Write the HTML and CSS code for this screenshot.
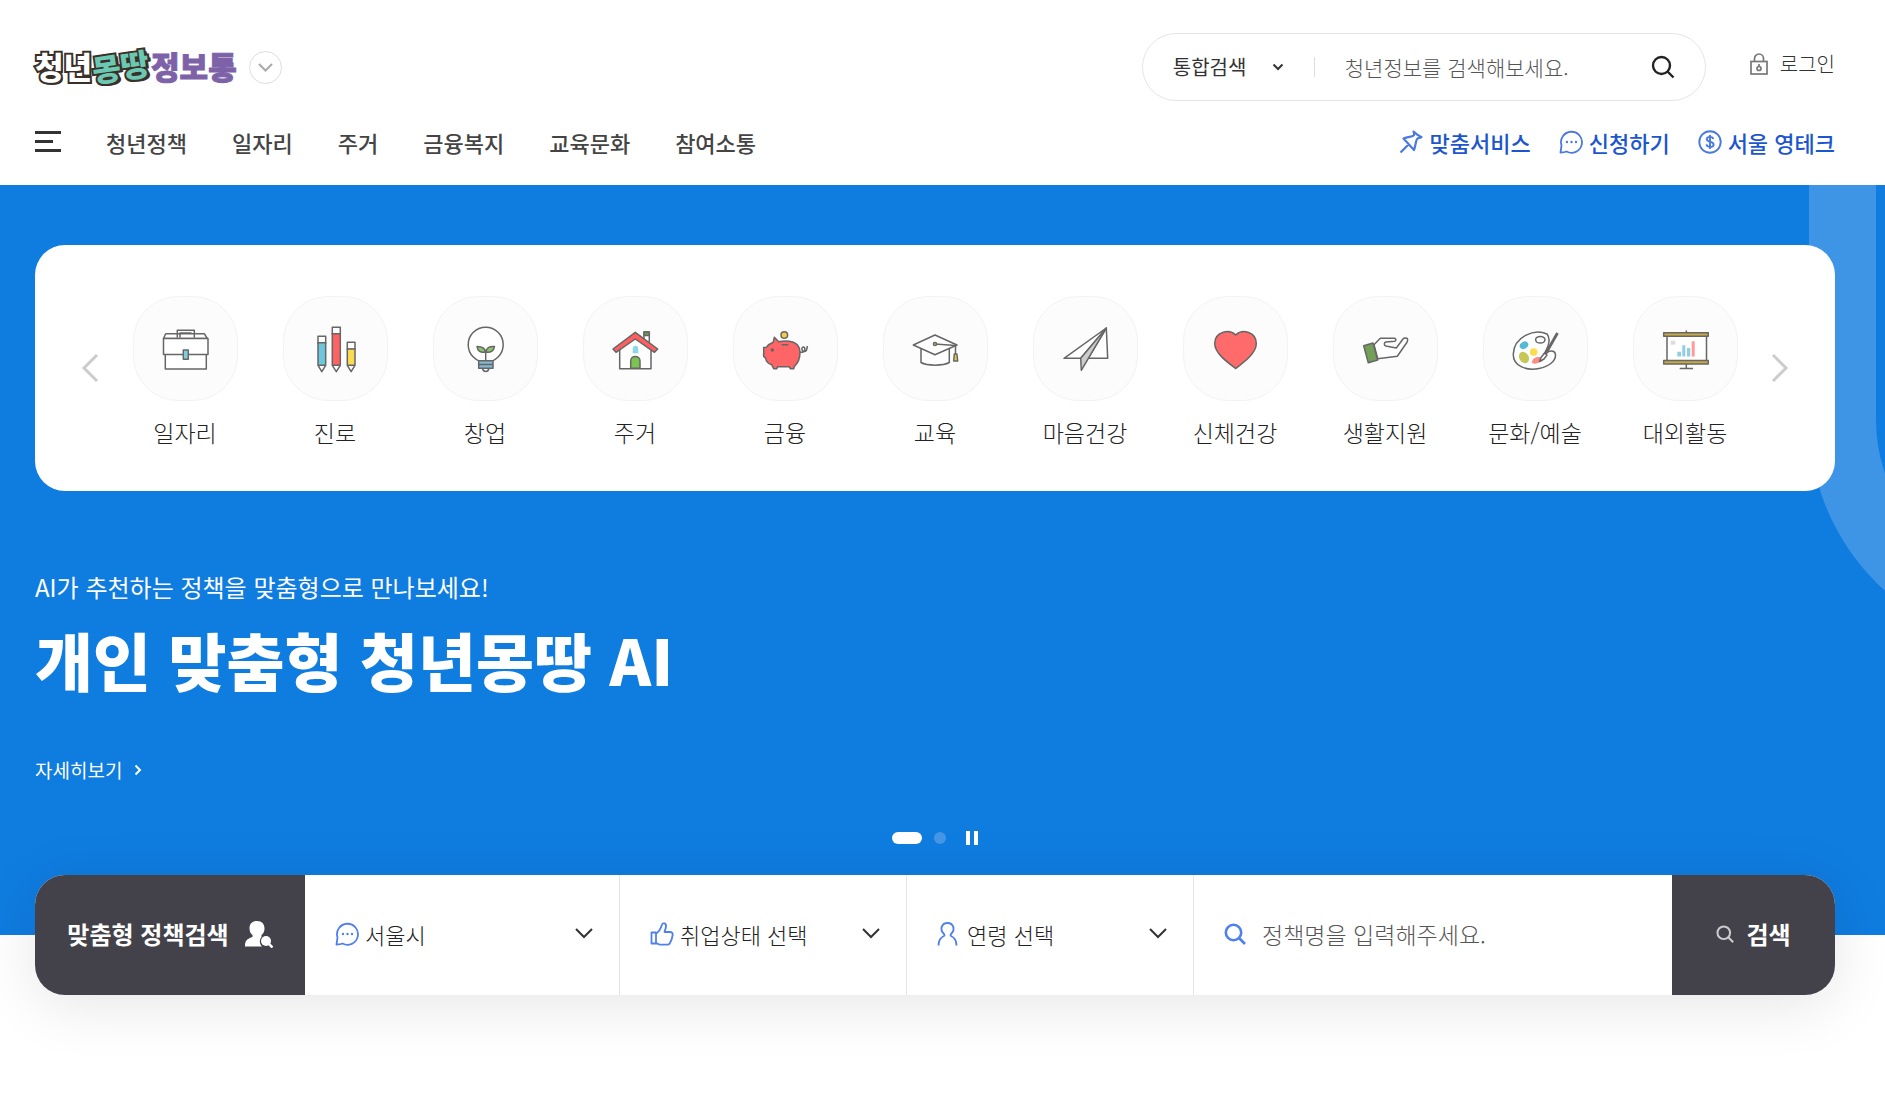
FILE: index.html
```html
<!DOCTYPE html>
<html lang="ko">
<head>
    <meta charset="UTF-8">
    <meta name="viewport" content="width=device-width, initial-scale=1.0">
    <title>청년몽땅정보통</title>
    <link rel="stylesheet" href="styles.css">
</head>
<body>
    <header class="header">
        <div class="header-top">
            <div class="brand">
                <a href="#" class="logo"><span class="logo-youth">청년</span><span class="logo-all">몽땅</span><span class="logo-info">정보통</span></a>
                <button type="button" class="brand-toggle" aria-label="사이트 더보기">
                    <svg width="15" height="9" viewBox="0 0 15 9"><path d="M1 1l6.500 6.500L14 1" fill="none" stroke="#aaa" stroke-width="2"/></svg>
                </button>
            </div>
            <div class="header-tools">
                <form class="site-search">
                    <label class="search-type">
                        <select aria-label="검색 구분">
                            <option>통합검색</option>
                        </select>
                        <svg width="12" height="8" viewBox="0 0 12 8"><path d="M1.500 1.500L6 6l4.500-4.500" fill="none" stroke="#333" stroke-width="2"/></svg>
                    </label>
                    <input type="text" placeholder="청년정보를 검색해보세요." aria-label="검색어">
                    <button type="submit" class="icon-button" aria-label="검색">
                        <svg width="24" height="24" viewBox="0 0 24 24"><g fill="none" stroke="#222" stroke-width="2.400"><circle cx="10.500" cy="10.500" r="8.500"/><path d="M16.500 16.500L22.500 22.500"/></g></svg>
                    </button>
                </form>
                <a href="#" class="login">
                    <svg width="18" height="22" viewBox="0 0 18 22"><g fill="none" stroke="#777" stroke-width="1.700"><rect x="1" y="8.500" width="16" height="12.500"/><path d="M4.500 8V5.500a4.500 4.500 0 0 1 9 0V8"/><circle cx="9" cy="15.500" r="2"/><path d="M9 11v3"/></g></svg>
                    로그인
                </a>
            </div>
        </div>
        <div class="header-nav">
            <nav class="main-nav">
                <button type="button" class="menu-button" aria-label="전체메뉴"><i></i><i></i><i></i></button>
                <a href="#">청년정책</a>
                <a href="#">일자리</a>
                <a href="#">주거</a>
                <a href="#">금융복지</a>
                <a href="#">교육문화</a>
                <a href="#">참여소통</a>
            </nav>
            <nav class="quick-nav">
                <a href="#">
                    <svg width="24" height="24" viewBox="0 0 24 24"><path d="M14.500 1.500c2.500 2.500 5 4.500 8 5.500-1.500 1-3 1-4 1.500-2 2-1.500 6-3.500 11.500L4.500 8.500C10 6.500 14 7 15 5c.500-1.500 0-2.500-.500-3.500zM9.500 14.500l-8 8" fill="none" stroke="#4a7ade" stroke-width="2.200" stroke-linejoin="round"/></svg>
                    맞춤서비스
                </a>
                <a href="#">
                    <svg width="24" height="24" viewBox="0 0 24 24"><path d="M1.500 22.500l1-7A10.500 10.500 0 1 1 7.500 21.500c-2 1-4 1-6 1z" fill="none" stroke="#4a7ade" stroke-width="1.800" stroke-linejoin="round"/><g fill="#4a7ade"><circle cx="8" cy="12" r="1.200"/><circle cx="12.500" cy="12" r="1.200"/><circle cx="17" cy="12" r="1.200"/></g></svg>
                    신청하기
                </a>
                <a href="#">
                    <svg width="24" height="24" viewBox="0 0 24 24"><g fill="none" stroke="#4a7ade"><circle cx="12" cy="12" r="10.700" stroke-width="1.900"/><path d="M15.300 9c-.800-3-6.600-2.700-6.600.2 0 3.300 6.900 1.800 6.900 5.200 0 3.300-6.500 3.300-7.200 0M12 5v14" stroke-width="1.900"/></g></svg>
                    서울 영테크
                </a>
            </nav>
        </div>
    </header>

    <main>
        <section class="hero">
            <div class="category-panel">
                <button type="button" class="slide-button" aria-label="이전">
                    <svg width="18" height="30" viewBox="0 0 18 30"><path d="M16 2L3 15l13 13" fill="none" stroke="#ccc" stroke-width="3"/></svg>
                </button>
                <ul class="category-list">
                    <li><a href="#">
                        <span class="category-icon">
                            <!-- briefcase -->
                            <svg class="line" viewBox="0 0 48 48"><path d="M16.300 12.500V5.300h17v7.200M19 12.500V8h11.500M2.500 13.500l2.200-4.800h38.600l3 4.800z"/><rect x="4.300" y="29" width="41" height="15"/><rect x="2.500" y="13.500" width="44.500" height="16"/><rect x="22.300" y="25" width="5" height="9.300" fill="#82cde0"/></svg>
                        </span>
                        일자리
                    </a></li>
                    <li><a href="#">
                        <span class="category-icon">
                            <!-- pencils -->
                            <svg class="line" viewBox="0 0 48 48"><path d="M7 40.300l3.800 6.400 3.900-6.400M21.300 40.300l4 6.400 4-6.400M36.300 40.300l3.800 6.400 3.900-6.400"/><rect x="7" y="11.300" width="7.700" height="7"/><rect x="21.300" y="2.300" width="8" height="7"/><rect x="36.300" y="17.300" width="7.700" height="7"/><rect x="7" y="17.700" width="7.700" height="22.600" fill="#6cc6dc"/><rect x="21.300" y="8.700" width="8" height="31.600" fill="#ff6262"/><rect x="36.300" y="24" width="7.700" height="16.300" fill="#fbdc50"/></svg>
                        </span>
                        진로
                    </a></li>
                    <li><a href="#">
                        <span class="category-icon">
                            <!-- light bulb -->
                            <svg class="line" viewBox="0 0 48 48"><circle cx="24.700" cy="19.700" r="17.500"/><path d="M24.700 36V26"/><path d="M24.500 27c-5 1-8-1-8.500-5.500 4.500 0 8 1 8.500 5.500zM25 27c0-4 3.500-6 8.500-5.500C33 25.500 30 28 25 27z" fill="#8dc66c"/><path d="M21.500 43.500c1 4 5.500 4 6.500 0"/><path d="M17.700 35.700H32v7.600H17.700zM17.700 39.500H32" fill="#82b9d0"/></svg>
                        </span>
                        창업
                    </a></li>
                    <li><a href="#">
                        <span class="category-icon">
                            <!-- house -->
                            <svg class="line" viewBox="0 0 48 48"><rect x="33" y="7" width="5.300" height="12"/><rect x="33" y="7" width="5.300" height="3.500" fill="#67a047"/><path d="M8.700 24v19.700H40V24L24.300 12z"/><path d="M24.300 7.300L2 24l3 3.300L24.300 14l19.200 13.300 3.200-3.300z" fill="#ff5f61"/><path d="M19.700 43.300V36c0-6 9.300-6 9.300 0v7.300z" fill="#7cc452"/><path d="M21.700 28.300v-4.500c0-4 5.600-4 5.600 0v4.500z" fill="#90d7e6" stroke="none"/></svg>
                        </span>
                        주거
                    </a></li>
                    <li><a href="#">
                        <span class="category-icon">
                            <!-- piggy bank -->
                            <svg class="line" viewBox="0 0 48 48"><path d="M39 27c5 2 6-5 3.500-5s-2 5 1 4.500 2-3 3-5.500" fill="none"/><path d="M13.300 12.300l4.400 4.500c4-1 10-1 14 .2 4.500 1.500 7.300 5.500 7.300 10.300 0 6-2 11-5.700 14l-.6 2.400h-3.400l-1-2H16.700l-1 2h-3l-2-4C6.500 38.500 5 36 4.500 33c-2-1-2.200-3-1.800-4.700V22.500l2.800-.3c1.500-2.200 3.500-3.700 6.700-4.900z" fill="#ff6466"/><path d="M20.500 19.800h7"/><circle cx="11.300" cy="25" r="1" fill="#444"/><circle cx="23.300" cy="10" r="3.300" fill="#f5cf43"/></svg>
                        </span>
                        금융
                    </a></li>
                    <li><a href="#">
                        <span class="category-icon">
                            <!-- graduation cap -->
                            <svg class="line" viewBox="0 0 48 48"><path d="M10 23v14.500c6 3.500 22 3.500 28.300 0V23"/><path d="M2.300 20L24 10l22 10-22 9.700z"/><path d="M24 19l20.500 1.500V29" fill="none"/><circle cx="24" cy="19" r="1.600" fill="#e8ca48"/><path d="M43.300 29h2.600l.8 7h-4z" fill="#e8ca48"/></svg>
                        </span>
                        교육
                    </a></li>
                    <li><a href="#">
                        <span class="category-icon">
                            <!-- paper plane -->
                            <svg class="line" viewBox="0 0 48 48"><path d="M45.300 3L3 33.300h16.700zM45.300 3l1.400 30.300H27z"/><path d="M45.300 3L19.700 33.300l.6 12z" fill="#ccc"/></svg>
                        </span>
                        마음건강
                    </a></li>
                    <li><a href="#">
                        <span class="category-icon">
                            <!-- heart -->
                            <svg class="line" viewBox="0 0 48 48"><path d="M24.700 43.500C16 37 3.700 28 3.700 18.500 3.700 7 18 3.500 24.700 10c6.700-6.500 20.600-3 20.600 8.500 0 9.500-12 18.500-20.600 25z" fill="#ff6a6b"/></svg>
                        </span>
                        신체건강
                    </a></li>
                    <li><a href="#">
                        <span class="category-icon">
                            <!-- helping hand -->
                            <svg class="line" viewBox="0 0 48 48"><path d="M13 19.700l6.300-6.400h14c2 0 2 2.500.5 3l-9 .7c-2 .5-2 3.500 0 4l10.500 2L42 14c.5-.7 1.500-.9 2.500-.9 2 0 2.900.7 1.500 4.200L36.300 31.300l-19.600 2.400z"/><path d="M2.700 20.700L12 18l4.700 17-9.400 2.700z" fill="#739f59"/></svg>
                        </span>
                        생활지원
                    </a></li>
                    <li><a href="#">
                        <span class="category-icon">
                            <!-- palette -->
                            <svg class="line" viewBox="0 0 48 48"><path d="M36 9C23 3 3 12 2.300 29c-.5 12 13 17 25.700 14.500C38 41.500 44.700 36 44.500 30c-.2-4-4-5-8.500-2.500L32 31c4-7 9-16 4-22z"/><ellipse cx="29.300" cy="14.700" rx="4.700" ry="3.300"/><g stroke="none"><ellipse cx="13" cy="20.300" rx="4.500" ry="3.500" fill="#56b9d3" transform="rotate(-30 13 20.300)"/><ellipse cx="13" cy="32.500" rx="4.700" ry="6" fill="#c7c755" transform="rotate(-30 13 32.500)"/><circle cx="22.700" cy="27" r="3.800" fill="#ffdc4b"/><path d="M21 38c0-5 5-7 9-5.500 3 1.500 3 3-1 4.500-3 1.500-5 2.500-8 1z" fill="#ff8b88"/></g><path d="M46.500 8L34.500 29" stroke-width="2.800"/><path d="M33.500 28l-3.500 4.500-1.500 4 4.500-2.500 3-4z"/></svg>
                        </span>
                        문화/예술
                    </a></li>
                    <li><a href="#">
                        <span class="category-icon">
                            <!-- presentation board -->
                            <svg class="line" viewBox="0 0 48 48"><path d="M25.300 5.500v3M25.300 39v4.300M18.700 43.500H32"/><rect x="6" y="10" width="39.500" height="27"/><g fill="#c7aa44"><rect x="2.700" y="7.700" width="44.600" height="3.500"/><rect x="2.700" y="35.500" width="44.600" height="3.500"/></g><g stroke="none"><path d="M9.700 15.700h4.600v4H9.700z" fill="#ddd"/><path d="M16.300 26.700H20v4.800h-3.700zM21.300 20.300h3v11.200h-3zM26 23h3.300v8.500H26z" fill="#91cfe0"/><path d="M30.700 16.300h3v15.200h-3z" fill="#ff9a98"/></g></svg>
                        </span>
                        대외활동
                    </a></li>
                </ul>
                <button type="button" class="slide-button" aria-label="다음">
                    <svg width="18" height="30" viewBox="0 0 18 30"><path d="M2 2l13 13L2 28" fill="none" stroke="#ccc" stroke-width="3"/></svg>
                </button>
            </div>

            <p class="hero-sub">AI가 추천하는 정책을 맞춤형으로 만나보세요!</p>
            <h1 class="hero-title">개인 맞춤형 청년몽땅 AI</h1>
            <a href="#" class="hero-more">
                자세히보기
                <svg width="8" height="12" viewBox="0 0 8 12"><path d="M1.500 1.500L6 6l-4.500 4.500" fill="none" stroke="#fff" stroke-width="2"/></svg>
            </a>
            <div class="pager">
                <button type="button" class="pager-dot active" aria-label="1번 배너"></button>
                <button type="button" class="pager-dot" aria-label="2번 배너"></button>
                <button type="button" class="pager-pause" aria-label="일시정지"></button>
            </div>
        </section>

        <form class="policy-search">
            <h2 class="policy-title">
                맞춤형 정책검색
                <svg width="28" height="28" viewBox="0 0 28 28"><path d="M12 1c5 0 7.500 3 7.500 7.500 0 3-1 5-3 6.500v2c-2.500 3-2 7 .5 9.500H0c0-5 1-7.500 7.500-9.500v-2C5.500 13.500 4.500 11 4.500 8.500 4.500 4 7 1 12 1z" fill="#fff"/><circle cx="21" cy="21" r="5" fill="#fff"/><path d="M24 24l3.500 3.500" stroke="#fff" stroke-width="2.500"/></svg>
            </h2>
            <label class="policy-field region">
                <svg width="24" height="24" viewBox="0 0 24 24"><path d="M1.500 22.500l1-7A10.500 10.500 0 1 1 7.500 21.500c-2 1-4 1-6 1z" fill="none" stroke="#4f80ee" stroke-width="1.800" stroke-linejoin="round"/><g fill="#4f80ee"><circle cx="8" cy="12" r="1.200"/><circle cx="12.500" cy="12" r="1.200"/><circle cx="17" cy="12" r="1.200"/></g></svg>
                <select aria-label="지역"><option>서울시</option></select>
                <svg width="18" height="11" viewBox="0 0 18 11"><path d="M1 1l8 8 8-8" fill="none" stroke="#333" stroke-width="2"/></svg>
            </label>
            <label class="policy-field">
                <svg width="24" height="24" viewBox="0 0 24 24"><path d="M1.500 10.500h4.500v11H1.500zM6 11.500c3.500-2 5-5.500 6-9 .5-2 4.500-1.500 4 2-.3 2-.8 3.500-1.500 5.500h5.500c2 0 3 1.500 2.700 3-.5 3.500-1.500 6-3 8.500-.5.800-1.200 1.200-2.200 1.200H10c-1.500 0-2.500-.7-4-1.700z" fill="none" stroke="#4f80ee" stroke-width="1.800" stroke-linejoin="round"/></svg>
                <select aria-label="취업상태"><option>취업상태 선택</option></select>
                <svg width="18" height="11" viewBox="0 0 18 11"><path d="M1 1l8 8 8-8" fill="none" stroke="#333" stroke-width="2"/></svg>
            </label>
            <label class="policy-field">
                <svg width="24" height="24" viewBox="0 0 24 24"><path d="M1.500 23.500c0-5 2-8 5.500-9.500.7-.5.500-1.300 0-2C2 7 5 1 10.500 1s8.500 6 3.500 11c-.5.700-.7 1.500 0 2 3.500 1.500 5.500 4.500 5.500 9.500" fill="none" stroke="#4f80ee" stroke-width="1.900"/></svg>
                <select aria-label="연령"><option>연령 선택</option></select>
                <svg width="18" height="11" viewBox="0 0 18 11"><path d="M1 1l8 8 8-8" fill="none" stroke="#333" stroke-width="2"/></svg>
            </label>
            <label class="policy-field keyword">
                <svg width="22" height="22" viewBox="0 0 22 22"><g fill="none" stroke="#4f80ee" stroke-width="2.600"><circle cx="9.500" cy="9.500" r="7.700"/><path d="M15 15l6 6"/></g></svg>
                <input type="text" placeholder="정책명을 입력해주세요." aria-label="정책명">
            </label>
            <button type="submit" class="policy-submit">
                <svg width="18" height="18" viewBox="0 0 22 22"><g fill="none" stroke="#ccc" stroke-width="2.500"><circle cx="9.500" cy="9.500" r="7.700"/><path d="M15 15l6 6"/></g></svg>
                검색
            </button>
        </form>
    </main>
</body>
</html>
```
FILE: styles.css
```css
*,
*::before {
    box-sizing: border-box;
}

body {
    margin: 0;
    font-family: "Noto Sans CJK KR", "Noto Sans", sans-serif;
    font-size: 22px;
    font-weight: 300;
    color: #333;
    background-color: #fff;
}

main {
    padding-bottom: 116px;
}

a {
    color: inherit;
    text-decoration: none;
}

button,
input,
select {
    font: inherit;
    color: inherit;
    border: 0;
    padding: 0;
    background: none;
    outline: none;
}

button {
    cursor: pointer;
}

select {
    appearance: none;
}

svg {
    display: block;
    flex: none;
}

/* Header */
.header {
    padding: 33px 50px 0 35px;
}

.header-top,
.header-nav,
.brand,
.header-tools,
.main-nav,
.quick-nav {
    display: flex;
    align-items: center;
}

.header-top,
.header-nav {
    justify-content: space-between;
}

.brand {
    gap: 12px;
}

.logo {
    display: flex;
    align-items: center;
    font-size: 31px;
    line-height: 42px;
    font-weight: 900;
    padding-bottom: 3px;
}

.logo-youth {
    color: #fff;
    -webkit-text-stroke: 4px #3a3029;
    paint-order: stroke fill;
    text-shadow: 2px 2px 0 #3a3029;
}

.logo-all {
    color: #6bc9b3;
    -webkit-text-stroke: 4px #3a3029;
    paint-order: stroke fill;
    text-shadow: 3px 2px 0 #3a3029;
    transform: rotate(-8deg);
    margin-right: 2px;
}

.logo-info {
    color: #7d62a8;
    -webkit-text-stroke: 1px #7d62a8;
}

.brand-toggle {
    display: flex;
    align-items: center;
    justify-content: center;
    width: 33px;
    height: 33px;
    border: 1px solid #ddd;
    border-radius: 50%;
}

.header-tools {
    gap: 44px;
}

.site-search {
    display: flex;
    align-items: center;
    width: 564px;
    height: 68px;
    padding: 0 30px;
    border: 1px solid #e5e5e5;
    border-radius: 35px;
}

.search-type {
    display: flex;
    align-items: center;
    width: 142px;
    padding-right: 30px;
    border-right: 1px solid #ddd;
    font-size: 20px;
    line-height: 20px;
    font-weight: 400;
}

.search-type select {
    flex: 1;
    min-width: 0;
    height: 20px;
}

.site-search input {
    flex: 1;
    min-width: 0;
    padding-left: 30px;
    font-size: 21px;
}

.site-search input::placeholder,
.keyword input::placeholder {
    color: #555;
    opacity: 1;
}

.login {
    display: flex;
    align-items: center;
    gap: 12px;
    padding-bottom: 6px;
    font-size: 20px;
    line-height: 30px;
}

.header-nav {
    height: 84px;
    padding-bottom: 3px;
    color: #444;
    font-weight: 500;
}

.main-nav {
    gap: 45px;
}

.menu-button {
    display: flex;
    flex-direction: column;
    gap: 6px;
    width: 26px;
}

.menu-button i {
    width: 26px;
    height: 3px;
    background-color: #333;
}

.menu-button i:nth-child(2) {
    width: 18px;
}

.quick-nav {
    gap: 28px;
    color: #1c56cf;
}

.quick-nav a {
    display: flex;
    align-items: center;
    gap: 6px;
}

/* Hero */
.hero {
    position: relative;
    overflow: hidden;
    padding: 60px 50px 90px 35px;
    background-color: #0f7ce0;
    color: #fff;
}

/* pale U shape that runs off the right edge */
.hero::before {
    content: "";
    position: absolute;
    top: -67px;
    right: -384px;
    width: 460px;
    height: 532px;
    border: 67px solid #3f95e5;
    border-radius: 0 0 230px 230px;
}

.category-panel {
    position: relative;
    display: flex;
    align-items: center;
    justify-content: space-between;
    padding: 51px 46px 44px;
    border-radius: 30px;
    background-color: #fff;
    color: #222;
}

.slide-button {
    margin-bottom: 8px;
}

.category-list {
    display: flex;
    flex: 1;
    margin: 0 11px;
    padding: 0;
    list-style: none;
}

.category-list li {
    flex: 1;
}

.category-list a {
    display: flex;
    flex-direction: column;
    align-items: center;
    gap: 16px;
    font-size: 23px;
    line-height: 30px;
    white-space: nowrap;
}

.category-icon {
    display: flex;
    align-items: center;
    justify-content: center;
    width: 105px;
    height: 105px;
    border: 1px solid #f3f3f3;
    border-radius: 45px;
    background-color: #fcfcfc;
}

.line {
    width: 48px;
    height: 48px;
    fill: #fff;
    stroke: #666;
    stroke-width: 1.5;
    stroke-linejoin: round;
}

.hero-sub {
    margin: 78px 0 0;
    font-size: 24px;
    line-height: 36px;
    font-weight: 400;
}

.hero-title {
    margin: 14px 0 0;
    font-size: 63px;
    line-height: 80px;
    font-weight: 900;
}

.hero-more {
    display: inline-flex;
    align-items: center;
    gap: 12px;
    margin-top: 56px;
    font-size: 19px;
    line-height: 30px;
    font-weight: 400;
}

.pager {
    display: flex;
    align-items: center;
    justify-content: center;
    gap: 12px;
    margin-top: 46px;
}

.pager-dot {
    width: 12px;
    height: 12px;
    border-radius: 6px;
    background-color: #4597e6;
}

.pager-dot.active {
    width: 30px;
    background-color: #fff;
}

.pager-pause {
    width: 12px;
    height: 14px;
    margin-left: 8px;
    border: solid #fff;
    border-width: 0 4px;
}

/* Policy search bar */
.policy-search {
    position: relative;
    display: flex;
    height: 120px;
    margin: -60px 50px 0 35px;
    border-radius: 30px;
    background-color: #fff;
    overflow: hidden;
    box-shadow: 0 10px 60px rgba(0, 0, 0, 0.1);
}

.policy-title,
.policy-submit {
    display: flex;
    align-items: center;
    justify-content: center;
    padding-bottom: 3px;
    background-color: #43424a;
    color: #fff;
    font-size: 24px;
    font-weight: 700;
}

.policy-title {
    gap: 16px;
    width: 270px;
    margin: 0;
}

.policy-field {
    display: flex;
    align-items: center;
    gap: 6px;
    width: 287px;
    padding: 0 26px 3px 30px;
    border-right: 1px solid #e5e5e5;
}

.policy-field.region {
    width: 315px;
}

.policy-field select {
    flex: 1;
    min-width: 0;
    color: #222;
}

.policy-field.keyword {
    flex: 1;
    gap: 16px;
    border-right: 0;
}

.keyword input {
    flex: 1;
    min-width: 0;
    font-size: 23px;
}

.policy-submit {
    gap: 12px;
    width: 163px;
}
```
